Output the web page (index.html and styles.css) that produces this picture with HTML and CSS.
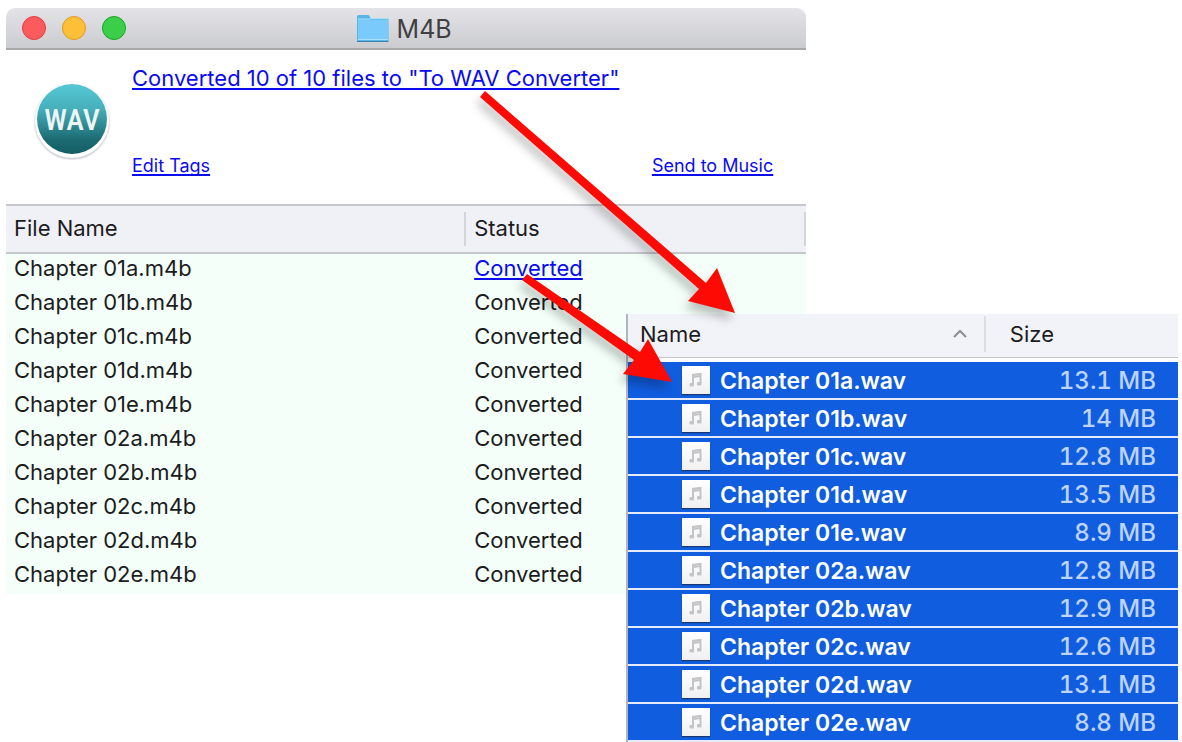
FILE: index.html
```html
<!DOCTYPE html>
<html lang="en">

<head>
    <meta charset="UTF-8">
    <meta name="viewport" content="width=device-width, initial-scale=1.0">
    <title>M4B</title>
    <link rel="stylesheet" href="styles.css">
</head>

<body>
    <main class="desktop">
        <section class="window">
            <header class="titlebar">
                <div class="traffic">
                    <button type="button" class="light close" aria-label="Close"></button>
                    <button type="button" class="light minimize" aria-label="Minimize"></button>
                    <button type="button" class="light zoom" aria-label="Zoom"></button>
                </div>
                <svg class="folder" viewBox="0 0 32 28" aria-hidden="true">
                    <path d="M0 2.5Q0 1 1.500 1H11q1 0 1.500 1l1 2H30q1.500 0 1.500 1.500V27H0z" fill="#58b5e4" />
                    <path d="M1 5.500H31V25H1z" fill="#7acbfc" />
                    <path d="M1 5h12M13 4.500H31M1 25.500H31" stroke="#a9e0fb" />
                    <path d="M0 27.500H31.500" stroke="#3e86ad" />
                </svg>
                <h1>M4B</h1>
            </header>

            <div class="summary">
                <svg class="app-icon" viewBox="0 0 80 80" role="img" aria-label="WAV">
                    <defs>
                        <linearGradient id="teal" x1="0" y1="0" x2="0" y2="1">
                            <stop offset="0" stop-color="#55c8d4" />
                            <stop offset=".35" stop-color="#46b0bb" />
                            <stop offset=".8" stop-color="#1b6a72" />
                            <stop offset="1" stop-color="#155d65" />
                        </linearGradient>
                    </defs>
                    <circle class="ring" cx="40" cy="41" r="37" />
                    <circle cx="40" cy="39" r="35" fill="url(#teal)" />
                    <text x="40" y="50" text-anchor="middle">WAV</text>
                </svg>
                <div class="links">
                    <a class="result" href="#files">Converted 10 of 10 files to "To WAV Converter"</a>
                    <div class="actions">
                        <a href="#tags">Edit Tags</a>
                        <a href="#music">Send to Music</a>
                    </div>
                </div>
            </div>

            <table class="sources">
                <thead>
                    <tr>
                        <th scope="col"><span>File Name</span></th>
                        <th scope="col"><span>Status</span></th>
                    </tr>
                </thead>
                <tbody>
                    <tr><td>Chapter 01a.m4b</td><td><a href="#files">Converted</a></td></tr>
                    <tr><td>Chapter 01b.m4b</td><td>Converted</td></tr>
                    <tr><td>Chapter 01c.m4b</td><td>Converted</td></tr>
                    <tr><td>Chapter 01d.m4b</td><td>Converted</td></tr>
                    <tr><td>Chapter 01e.m4b</td><td>Converted</td></tr>
                    <tr><td>Chapter 02a.m4b</td><td>Converted</td></tr>
                    <tr><td>Chapter 02b.m4b</td><td>Converted</td></tr>
                    <tr><td>Chapter 02c.m4b</td><td>Converted</td></tr>
                    <tr><td>Chapter 02d.m4b</td><td>Converted</td></tr>
                    <tr><td>Chapter 02e.m4b</td><td>Converted</td></tr>
                </tbody>
            </table>
        </section>

        <section class="finder" id="files">
            <table class="files">
                <thead>
                    <tr>
                        <th scope="col">
                            <button type="button" class="sort">
                                Name
                                <svg viewBox="0 0 16 10" aria-hidden="true"><path d="M2 8l6-6 6 6" /></svg>
                            </button>
                        </th>
                        <th scope="col"><span class="size-head">Size</span></th>
                    </tr>
                </thead>
                <tbody id="fileRows"></tbody>
            </table>
        </section>

        <svg class="arrows" viewBox="0 0 1182 742" aria-hidden="true">
            <path d="M485 91L706 283L717 268L735 313L688 301L699 289L480 97z" />
            <path d="M527 274L640 352L648 339L672 382L623 374L634 360L522 280z" />
        </svg>
    </main>

    <script>
        const files = [
            ['Chapter 01a.wav', '13.1 MB'],
            ['Chapter 01b.wav', '14 MB'],
            ['Chapter 01c.wav', '12.8 MB'],
            ['Chapter 01d.wav', '13.5 MB'],
            ['Chapter 01e.wav', '8.9 MB'],
            ['Chapter 02a.wav', '12.8 MB'],
            ['Chapter 02b.wav', '12.9 MB'],
            ['Chapter 02c.wav', '12.6 MB'],
            ['Chapter 02d.wav', '13.1 MB'],
            ['Chapter 02e.wav', '8.8 MB']
        ];

        const note = `
            <svg class="note" viewBox="0 0 28 28" aria-hidden="true">
                <path d="M11 18V9l7.500-1v9" />
                <path d="M11 11l7.500-1" />
                <rect x="7.500" y="17" width="4.500" height="3.500" rx="1" />
                <rect x="15" y="16" width="4.500" height="3.500" rx="1" />
            </svg>`;

        document.getElementById('fileRows').innerHTML = files.map(([name, size]) => `
            <tr>
                <td><div class="file">${note}<span>${name}</span></div></td>
                <td>${size}</td>
            </tr>`).join('');
    </script>
</body>

</html>
```
FILE: styles.css
```css
* {
    box-sizing: border-box;
    margin: 0;
    padding: 0;
}

body {
    font-family: Inter, Roboto, "Liberation Sans", sans-serif;
    font-size: 22px;
    line-height: 30px;
    color: #1c1c1e;
    background-color: #fff;
}

button {
    font: inherit;
    color: inherit;
    border: none;
    background: none;
    cursor: pointer;
}

a {
    color: #0b0bf0;
    text-decoration: underline;
    text-decoration-thickness: 2px;
    text-underline-offset: 2px;
    text-decoration-skip-ink: none;
}

table {
    width: 100%;
    table-layout: fixed;
    border-spacing: 0;
}

th {
    font-weight: 400;
    text-align: left;
}

.desktop {
    position: relative;
    min-height: 100vh;
    padding: 8px 6px 0;
}

/* Converter window */
.window {
    width: 68.4%;
}

.titlebar {
    position: relative;
    display: flex;
    align-items: center;
    justify-content: center;
    gap: 8px;
    height: 42px;
    padding-right: 4px;
    border-bottom: 2px solid #a9a9ab;
    border-radius: 9px 9px 0 0;
    background: linear-gradient(#e4e4e8, #cbcccf);
}

.titlebar h1 {
    padding-top: 2px;
    font-size: 25px;
    font-weight: 400;
    color: #404042;
}

.folder {
    width: 32px;
    height: 28px;
}

.traffic {
    position: absolute;
    left: 16px;
    display: flex;
    gap: 16px;
}

.light {
    width: 24px;
    height: 24px;
    border-radius: 50%;
    border: 1px solid;
}

.close {
    background-color: #fc5b5e;
    border-color: #e23c40;
}

.minimize {
    background-color: #fdbf37;
    border-color: #e29a1c;
}

.zoom {
    background-color: #3bce48;
    border-color: #16a522;
}

.summary {
    display: flex;
    height: 154px;
    padding: 13px 33px 0 26px;
    gap: 20px;
}

.app-icon {
    flex: none;
    width: 80px;
    height: 80px;
    margin-top: 17px;
}

.app-icon .ring {
    fill: #fff;
    filter: drop-shadow(0 1px 1px rgba(0, 0, 40, 0.3));
}

.app-icon text {
    font-family: "Roboto Condensed", "Open Sans Condensed", "Liberation Sans Narrow", Roboto, sans-serif;
    font-size: 30px;
    font-weight: 500;
    fill: #eef4f4;
}

.links {
    display: flex;
    flex: 1;
    flex-direction: column;
    justify-content: space-between;
    padding-bottom: 23px;
}

.actions {
    display: flex;
    justify-content: space-between;
    font-size: 18px;
}

.sources th {
    height: 50px;
    padding: 0;
    border-top: 2px solid #c6c7ca;
    border-bottom: 2px solid #c6c7ca;
    background-color: #f0f1f6;
}

.sources th:first-child {
    width: 57.5%;
}

.sources th span {
    display: block;
    padding: 1px 8px 3px;
    border-right: 2px solid #d4d5d9;
}

.sources td {
    height: 34px;
    padding: 0 8px 4px;
    line-height: 28px;
    vertical-align: top;
    background-color: #f4fff9;
}

/* Output folder, laid over the converter window */
.finder {
    position: absolute;
    top: 314px;
    right: 4px;
    width: 46.7%;
    border-left: 2px solid #b2b5c0;
    background-color: #fff;
}

.files th {
    height: 44px;
    padding-bottom: 3px;
    border-bottom: 1px solid #c6c8c8;
    background-color: #f2f3f8;
}

.files th:last-child {
    width: 35.3%;
}

.sort {
    display: flex;
    align-items: center;
    justify-content: space-between;
    width: 100%;
    padding: 0 16px 0 12px;
}

.sort svg {
    width: 16px;
    height: 10px;
    fill: none;
    stroke: #8c8d91;
    stroke-width: 2;
}

.size-head {
    display: block;
    padding: 3px 24px;
    border-left: 2px solid #dcdde2;
}

.files td {
    height: 38px;
    color: #fff;
    border-bottom: 2px solid #e6ebfb;
    background-color: #105de0;
}

.files tr:first-child td {
    height: 42px;
    border-top: 4px solid #fff;
}

.files td:first-child {
    font-size: 23px;
    font-weight: 600;
}

.files td:last-child {
    padding-top: 2px;
    padding-right: 22px;
    font-size: 24px;
    font-weight: 500;
    font-variant-numeric: tabular-nums;
    text-align: right;
    color: #bdd3fa;
}

.file {
    display: flex;
    align-items: center;
    gap: 10px;
    padding-left: 54px;
}

.file span {
    padding-top: 2px;
}

.note {
    width: 28px;
    height: 28px;
    background: linear-gradient(#fff, #f0f0f2);
    box-shadow: 0 1px 1px #17356f;
    fill: #c3c4c8;
}

.note path {
    fill: none;
    stroke: #c3c4c8;
    stroke-width: 2;
}

/* Callout arrows, drawn over both windows */
.arrows {
    position: absolute;
    top: 0;
    left: 0;
    width: 1182px;
    height: 742px;
    pointer-events: none;
    fill: #fd0a04;
    filter: drop-shadow(-3px 7px 5px rgba(0, 0, 0, 0.25));
}
```
